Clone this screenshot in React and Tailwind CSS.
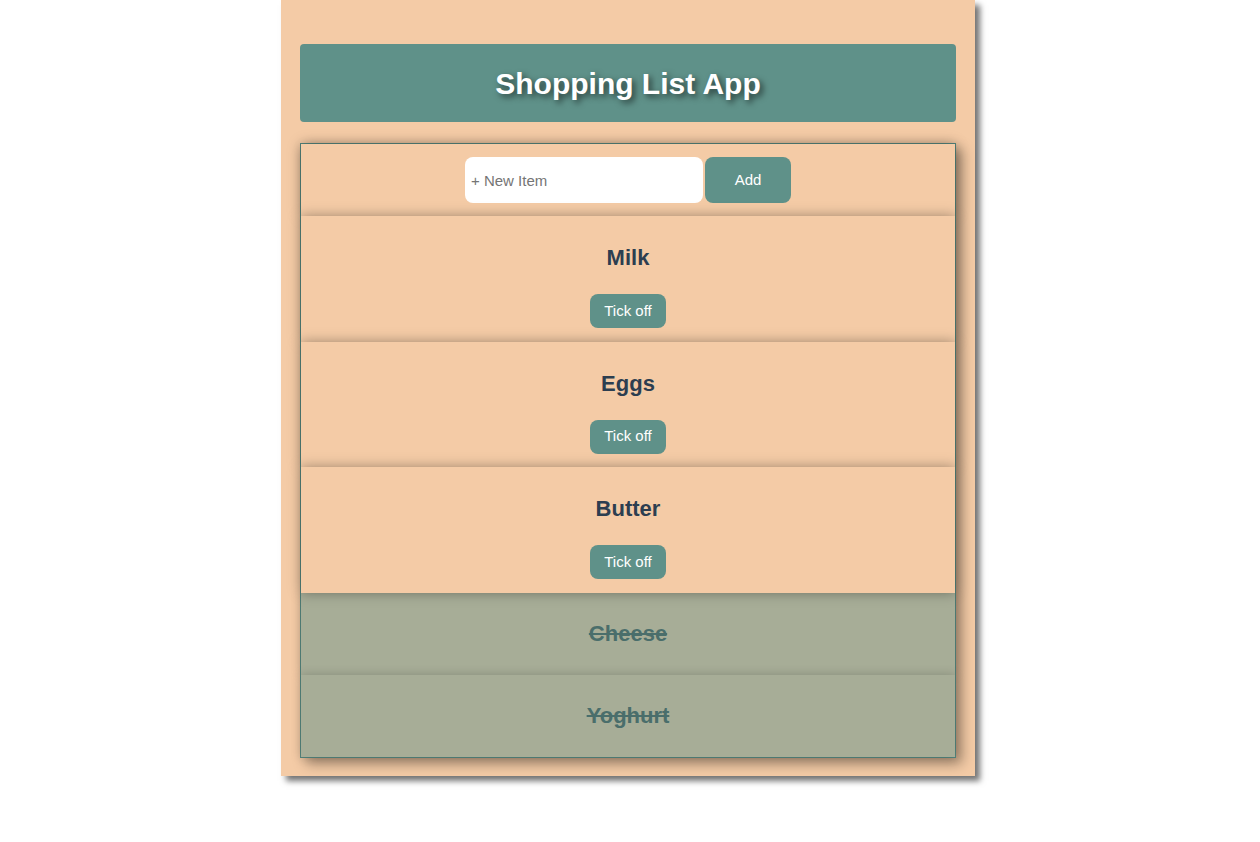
export default function App() {
  const font = { fontFamily: '"Liberation Sans", Arial, sans-serif' };
  const items = ["Milk", "Eggs", "Butter"];
  const done = ["Cheese", "Yoghurt"];
  return (
    <div className="min-h-[842px] w-full bg-white" style={font}>
      <div className="ml-[281px] w-[694px] bg-[#f4cba6] px-[19px] pt-[44px] pb-[18px] shadow-[5px_5px_6px_rgba(0,0,0,0.55)]">
        <div className="flex h-[78px] items-center justify-center rounded-[4px] bg-[#5f9189]">
          <h1 className="text-[30px] font-bold text-white [text-shadow:3px_3px_6px_rgba(0,0,0,0.6)]">
            Shopping List App
          </h1>
        </div>
        <div className="mt-[21px] border border-[#55867e] shadow-[6px_6px_12px_rgba(0,0,0,0.35)]">
          <div className="relative z-[1] flex h-[72px] items-center justify-center gap-[2px] bg-[#f4cba6] shadow-[0_0_12px_rgba(0,0,0,0.35)]">
            <input
              placeholder="+ New Item"
              className="h-[46px] w-[238px] rounded-lg bg-white pl-[6px] text-[15px] text-[#333] outline-none placeholder:text-[#757575]"
              style={font}
            />
            <button className="h-[46px] w-[86px] rounded-lg bg-[#5f9189] text-[15px] text-white" style={font}>
              Add
            </button>
          </div>
          {items.map((it) => (
            <div
              key={it}
              className="relative z-[1] flex h-[125.67px] flex-col items-center bg-[#f4cba6] pt-[31px] shadow-[0_0_12px_rgba(0,0,0,0.35)]"
            >
              <h2 className="text-[22px] font-bold leading-[22px] text-[#2c3e50]">{it}</h2>
              <button className="mt-[25px] h-[34px] w-[76px] rounded-lg bg-[#5f9189] text-[15px] text-white" style={font}>
                Tick off
              </button>
            </div>
          ))}
          {done.map((it) => (
            <div
              key={it}
              className="relative flex h-[82px] items-center justify-center bg-[#a7ad97] shadow-[0_0_10px_rgba(0,0,0,0.2)]"
            >
              <h2 className="text-[22px] font-bold text-[#4a6e6b] line-through">{it}</h2>
            </div>
          ))}
        </div>
      </div>
    </div>
  );
}
